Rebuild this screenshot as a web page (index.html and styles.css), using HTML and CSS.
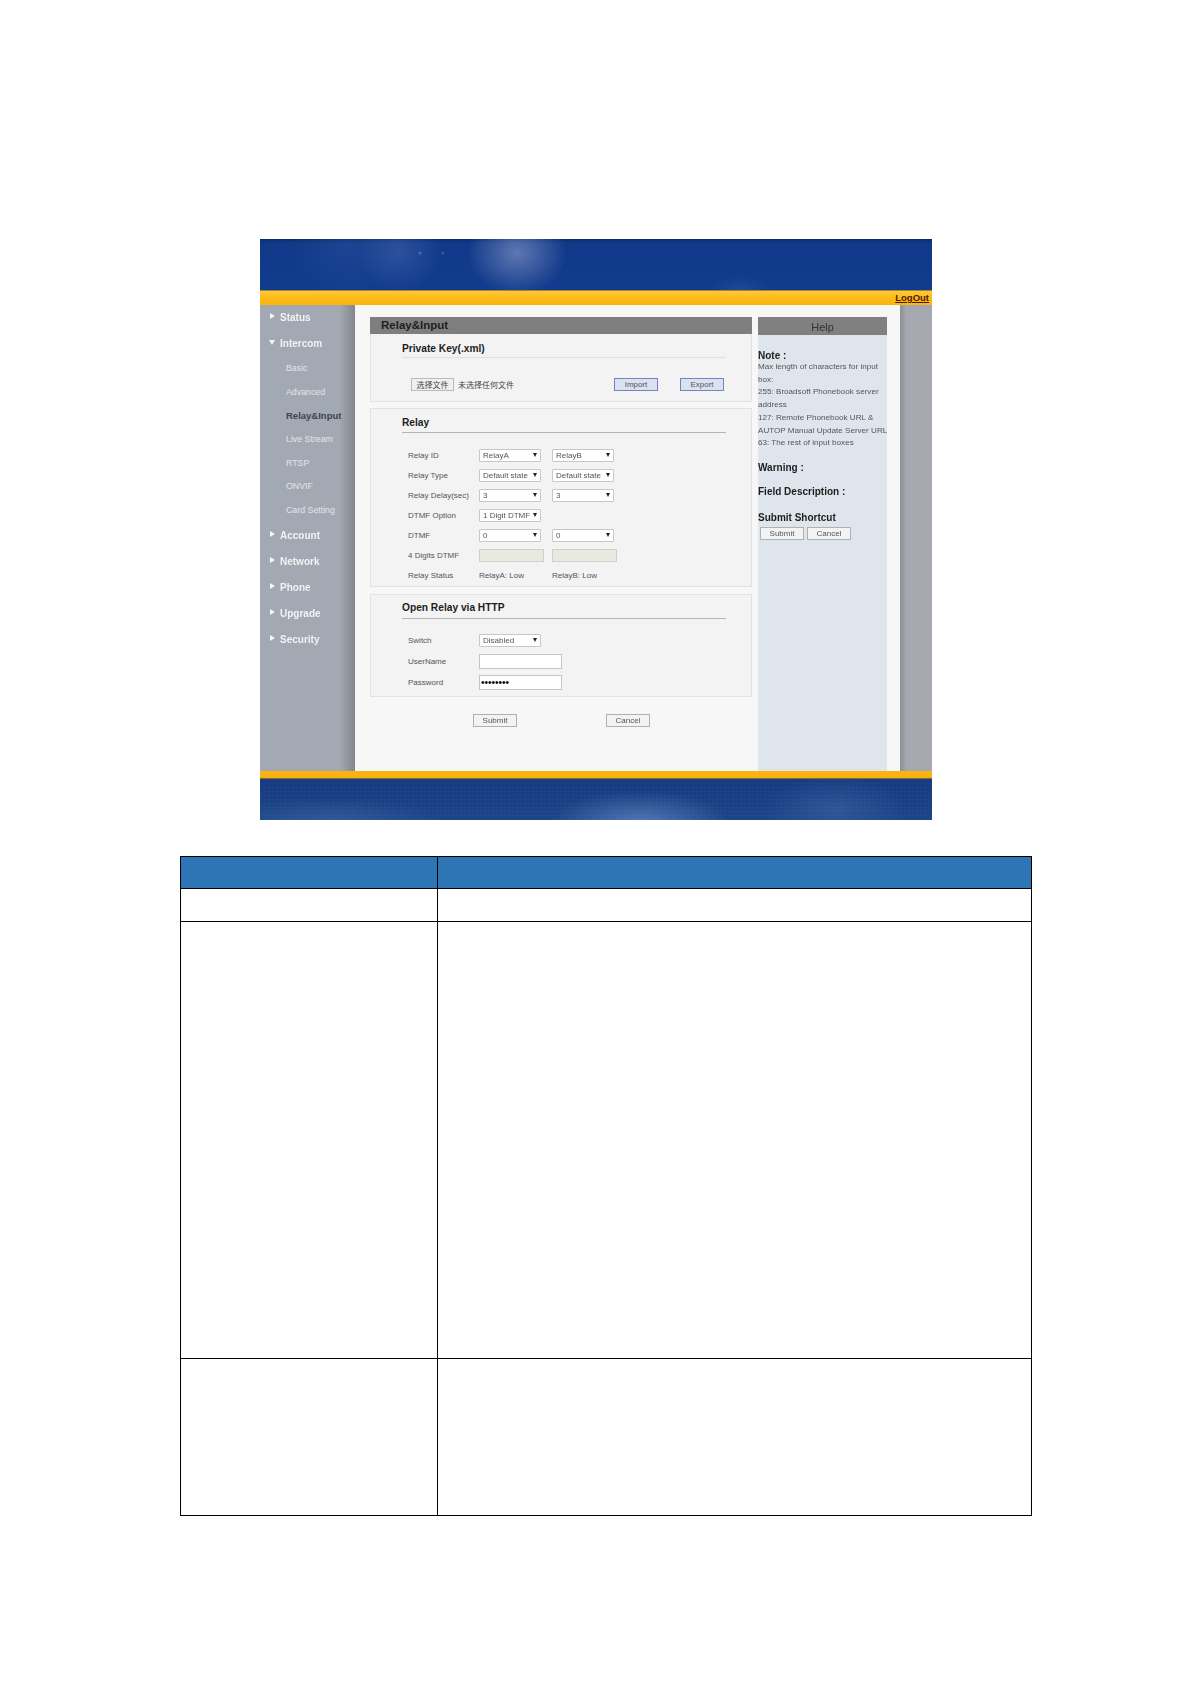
FILE: index.html
```html
<!DOCTYPE html>
<html lang="en">
<head>
    <meta charset="UTF-8">
    <meta name="viewport" content="width=device-width, initial-scale=1.0">
    <title>Relay&amp;Input</title>
    <link rel="stylesheet" href="styles.css">
</head>
<body>
    <div class="shot">
        <div class="banner"></div>
        <div class="gold-bar"><a class="logout" href="#">LogOut</a></div>

        <div class="shot-body">
            <nav class="sidebar">
                <a class="nav-head" href="#">Status</a>
                <a class="nav-head open" href="#">Intercom</a>
                <a class="nav-sub" href="#">Basic</a>
                <a class="nav-sub" href="#">Advanced</a>
                <a class="nav-sub current" href="#">Relay&amp;Input</a>
                <a class="nav-sub" href="#">Live Stream</a>
                <a class="nav-sub" href="#">RTSP</a>
                <a class="nav-sub" href="#">ONVIF</a>
                <a class="nav-sub" href="#">Card Setting</a>
                <a class="nav-head" href="#">Account</a>
                <a class="nav-head" href="#">Network</a>
                <a class="nav-head" href="#">Phone</a>
                <a class="nav-head" href="#">Upgrade</a>
                <a class="nav-head" href="#">Security</a>
            </nav>

            <main class="content">
                <div class="form-col">
                    <h1 class="page-title">Relay&amp;Input</h1>

                    <section class="panel panel-key">
                        <h2 class="panel-title">Private Key(.xml)</h2>
                        <div class="key-row">
                            <div class="file-pick">
                                <button class="file-btn">选择文件</button>
                                <span class="file-name">未选择任何文件</span>
                            </div>
                            <button class="blue-btn">Import</button>
                            <button class="blue-btn export">Export</button>
                        </div>
                    </section>

                    <section class="panel panel-relay">
                        <h2 class="panel-title">Relay</h2>
                        <div class="rows">
                            <div class="row">
                                <span>Relay ID</span>
                                <label class="select"><select><option>RelayA</option></select></label>
                                <label class="select"><select><option>RelayB</option></select></label>
                            </div>
                            <div class="row">
                                <span>Relay Type</span>
                                <label class="select"><select><option>Default state</option></select></label>
                                <label class="select"><select><option>Default state</option></select></label>
                            </div>
                            <div class="row">
                                <span>Relay Delay(sec)</span>
                                <label class="select"><select><option>3</option></select></label>
                                <label class="select"><select><option>3</option></select></label>
                            </div>
                            <div class="row">
                                <span>DTMF Option</span>
                                <label class="select"><select><option>1 Digit DTMF</option></select></label>
                            </div>
                            <div class="row">
                                <span>DTMF</span>
                                <label class="select"><select><option>0</option></select></label>
                                <label class="select"><select><option>0</option></select></label>
                            </div>
                            <div class="row">
                                <span>4 Digits DTMF</span>
                                <input class="off-input" type="text" disabled>
                                <input class="off-input" type="text" disabled>
                            </div>
                            <div class="row">
                                <span>Relay Status</span>
                                <span>RelayA: Low</span>
                                <span>RelayB: Low</span>
                            </div>
                        </div>
                    </section>

                    <section class="panel panel-http">
                        <h2 class="panel-title">Open Relay via HTTP</h2>
                        <div class="rows">
                            <div class="row tall">
                                <span>Switch</span>
                                <label class="select"><select><option>Disabled</option></select></label>
                            </div>
                            <div class="row tall">
                                <span>UserName</span>
                                <input class="text-input" type="text">
                            </div>
                            <div class="row tall">
                                <span>Password</span>
                                <input class="text-input" type="password" value="12345678">
                            </div>
                        </div>
                    </section>

                    <div class="form-actions">
                        <button class="plain-btn">Submit</button>
                        <button class="plain-btn">Cancel</button>
                    </div>
                </div>

                <aside class="help">
                    <div class="help-title">Help</div>
                    <div class="help-body">
                        <h3>Note :</h3>
                        <p>Max length of characters for input<br>box:<br>255: Broadsoft Phonebook server<br>address<br>127: Remote Phonebook URL &amp;<br>AUTOP Manual Update Server URL<br>63: The rest of input boxes</p>
                        <h3 class="warning">Warning :</h3>
                        <h3 class="field">Field Description :</h3>
                        <h3 class="shortcut">Submit Shortcut</h3>
                        <div class="help-actions">
                            <button class="plain-btn">Submit</button>
                            <button class="plain-btn">Cancel</button>
                        </div>
                    </div>
                </aside>
            </main>

            <div class="side-strip"></div>
        </div>

        <div class="gold-bar thin"></div>
        <div class="footer-band"></div>
    </div>

    <table class="spec-table">
        <tr class="head-row"><th></th><th></th></tr>
        <tr class="row-one"><td></td><td></td></tr>
        <tr class="row-two"><td></td><td></td></tr>
        <tr class="row-three"><td></td><td></td></tr>
    </table>
</body>
</html>
```

FILE: styles.css
```css
* {
    box-sizing: border-box;
}

body {
    margin: 0;
    padding-top: 239px;
    height: 1684px;
    background: #ffffff;
    font-family: "Liberation Sans", Arial, sans-serif;
    overflow: hidden;
}

button,
input,
select {
    font-family: inherit;
}

/* Screenshot of the web UI */
.shot {
    width: 672px;
    height: 581px;
    margin-left: 260px;
    display: flex;
    flex-direction: column;
    filter: blur(0.45px);
}

.banner {
    height: 51px;
    background:
        radial-gradient(ellipse 50px 42px at 257px 14px, rgba(120, 140, 190, 0.75), transparent),
        radial-gradient(circle 2px at 160px 14px, rgba(170, 190, 225, 0.5), transparent),
        radial-gradient(circle 2px at 183px 14px, rgba(150, 175, 215, 0.4), transparent),
        radial-gradient(circle 42px at 140px 12px, rgba(110, 140, 200, 0.28), transparent),
        radial-gradient(ellipse 60px 55px at 90px 5px, rgba(90, 125, 190, 0.16), transparent),
        radial-gradient(ellipse 30px 16px at 480px 52px, rgba(90, 125, 190, 0.22), transparent),
        linear-gradient(to bottom, #0d2c6c, #11398a 8%, #113b8c);
}

.gold-bar {
    height: 15px;
    display: flex;
    justify-content: flex-end;
    background: linear-gradient(to bottom, #7a6428, #ffc83a 10%, #fdb915 55%, #fcb50f);
}

.gold-bar.thin {
    height: 8px;
    background: linear-gradient(to bottom, #fbb310 80%, #4b4a3a);
}

.logout {
    padding: 1px 3px 0 0;
    font-size: 9.5px;
    line-height: 13px;
    font-weight: bold;
    color: #4a1d0a;
}

.shot-body {
    height: 466px;
    display: flex;
}

.sidebar {
    width: 95px;
    display: flex;
    flex-direction: column;
    background: linear-gradient(to right, #a2a9b3 84%, #83868c);
}

.sidebar a {
    text-decoration: none;
}

.nav-head {
    position: relative;
    height: 26px;
    padding-left: 20px;
    font-size: 10px;
    line-height: 25px;
    font-weight: bold;
    color: #f1f3f5;
}

.nav-head::before {
    content: '';
    position: absolute;
    left: 10px;
    top: 8px;
    border-left: 5px solid #f4f5f7;
    border-top: 3px solid transparent;
    border-bottom: 3px solid transparent;
}

.nav-head.open::before {
    left: 9px;
    top: 9px;
    border-top: 5px solid #f4f5f7;
    border-left: 3px solid transparent;
    border-right: 3px solid transparent;
    border-bottom: 0;
}

.nav-sub {
    height: 23.7px;
    padding-left: 26px;
    font-size: 8.8px;
    line-height: 23.7px;
    color: #e3e5e9;
}

.nav-sub:first-of-type {
    margin-top: -1px;
}

.nav-sub.current {
    font-size: 9.5px;
    font-weight: bold;
    color: #3f434a;
}

.content {
    width: 545px;
    padding: 12px 13px 0 15px;
    display: flex;
    gap: 6px;
    background: #f7f7f7;
}

.form-col {
    width: 382px;
}

.page-title {
    height: 17px;
    margin: 0;
    padding-left: 11px;
    font-size: 11.5px;
    line-height: 17px;
    font-weight: bold;
    color: #1f1f1f;
    background: #7e7e7e;
}

.panel {
    border: 1px solid #e2e2e2;
    background: #f3f3f3;
}

.panel-key {
    height: 68px;
    border-top: 0;
}

.panel-relay {
    height: 179px;
    margin-top: 6px;
}

.panel-http {
    height: 103px;
    margin-top: 7px;
}

.panel-title {
    width: 324px;
    height: 24px;
    margin: 0 0 0 31px;
    padding-top: 5px;
    font-size: 10.2px;
    line-height: 17px;
    font-weight: bold;
    color: #1d1d1d;
    border-bottom: 1px solid #b5b5b5;
}

.panel-key .panel-title {
    padding-top: 6px;
    border-bottom-color: #e1e1e1;
}

.panel-http .panel-title {
    padding-top: 4px;
}

.key-row {
    margin-top: 20px;
    padding-left: 40px;
    display: flex;
    align-items: center;
}

.file-pick {
    width: 203px;
    display: flex;
    align-items: center;
    gap: 4px;
}

.file-btn {
    width: 43px;
    height: 13px;
    padding: 0;
    font-size: 8px;
    line-height: 11px;
    font-family: "Noto Sans CJK SC", sans-serif;
    color: #444444;
    background: #f0f0f0;
    border: 1px solid #bbbbbb;
}

.file-name {
    font-size: 8px;
    font-family: "Noto Sans CJK SC", sans-serif;
    color: #444444;
}

.blue-btn {
    width: 44px;
    height: 13px;
    padding: 0;
    font-size: 8px;
    line-height: 11px;
    color: #555555;
    background: #dae2f2;
    border: 1px solid #7485b8;
}

.blue-btn.export {
    margin-left: 22px;
}

.rows {
    margin-top: 12px;
    padding-left: 37px;
}

.panel-http .rows {
    margin-top: 11px;
}

.row {
    height: 20px;
    display: grid;
    grid-template-columns: 71px 73px 70px;
    align-items: center;
    font-size: 8px;
    color: #555555;
}

.row.tall {
    height: 21px;
}

.select {
    position: relative;
    display: block;
    width: 62px;
    height: 13px;
}

.select select {
    width: 100%;
    height: 100%;
    padding: 0 0 0 3px;
    font-size: 8px;
    color: #555555;
    appearance: none;
    background: #ffffff;
    border: 1px solid #c8c8c8;
    border-radius: 1px;
}

.select::after {
    content: '';
    position: absolute;
    right: 4px;
    top: 4px;
    border-top: 4px solid #222222;
    border-left: 2.5px solid transparent;
    border-right: 2.5px solid transparent;
}

.off-input {
    width: 65px;
    height: 13px;
    padding: 0;
    background: #e9e9e1;
    border: 1px solid #d0d0c8;
}

.text-input {
    width: 83px;
    height: 15px;
    padding: 0 0 0 1px;
    font-size: 10px;
    background: #ffffff;
    border: 1px solid #c4c4c4;
}

.form-actions {
    margin-top: 17px;
    padding-left: 103px;
    display: flex;
    gap: 89px;
}

.plain-btn {
    width: 44px;
    height: 13px;
    padding: 0;
    font-size: 8px;
    line-height: 11px;
    color: #555555;
    background: #f3f3f3;
    border: 1px solid #b0b0b0;
}

.help {
    width: 129px;
    background: #dfe5ed;
}

.help-title {
    height: 18px;
    font-size: 11px;
    line-height: 20px;
    text-align: center;
    color: #333333;
    background: #808080;
}

.help-body {
    padding-top: 15px;
}

.help-body h3 {
    margin: 0;
    font-size: 10px;
    line-height: 12px;
    font-weight: bold;
    color: #1d1d1d;
}

.help-body h3:first-child {
    height: 11px;
}

.help-body p {
    margin: 0;
    font-size: 8.1px;
    line-height: 12.7px;
    color: #555555;
    white-space: nowrap;
}

.help-body .warning {
    margin-top: 12px;
}

.help-body .field {
    margin-top: 12px;
}

.help-body .shortcut {
    margin-top: 14px;
}

.help-actions {
    margin-top: 3px;
    padding-left: 2px;
    display: flex;
    gap: 3px;
}

.side-strip {
    width: 32px;
    background: linear-gradient(to right, #8d9098, #a5a8ae 20%);
}

.footer-band {
    height: 41px;
    background:
        repeating-linear-gradient(to right, rgba(150, 180, 225, 0.03) 0 1px, transparent 1px 4px),
        repeating-linear-gradient(to bottom, rgba(150, 180, 225, 0.03) 0 1px, transparent 1px 4px),
        radial-gradient(ellipse 90px 32px at 380px 44px, rgba(125, 160, 215, 0.55), transparent),
        radial-gradient(ellipse 110px 24px at 70px 42px, rgba(90, 130, 190, 0.32), transparent),
        radial-gradient(ellipse 70px 34px at 575px 30px, rgba(90, 130, 190, 0.3), transparent),
        linear-gradient(to bottom, #163a80, #1c4587);
}

/* Empty table below the screenshot */
.spec-table {
    width: 852px;
    height: 659px;
    margin: 36px 0 0 180px;
    border-collapse: collapse;
    table-layout: fixed;
}

.spec-table th,
.spec-table td {
    padding: 0;
    border: 1px solid #000000;
}

.spec-table th:first-child,
.spec-table td:first-child {
    width: 257px;
}

.head-row {
    height: 32px;
    background: #2e75b6;
}

.row-one {
    height: 33px;
}

.row-two {
    height: 437px;
}

.row-three {
    height: 157px;
}
```
